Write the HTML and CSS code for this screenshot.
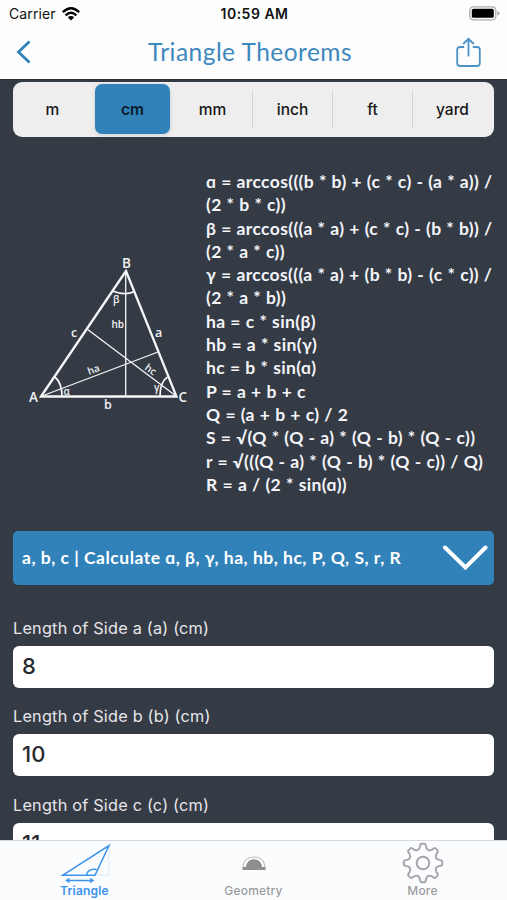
FILE: index.html
```html
<!DOCTYPE html>
<html lang="en">
<head>
<meta charset="utf-8">
<title>Triangle Theorems</title>
<link rel="stylesheet" href="styles.css">
</head>
<body>
<div class="app">
  <header class="top">
    <div class="status">
      <div class="carrier">Carrier
        <svg width="18" height="14" viewBox="0 0 18 14"><g fill="none" stroke="#000" stroke-width="2.3"><path d="M.8 5.2Q9-2.6 17.2 5.2"/><path d="M3.6 8.4Q9 3.2 14.4 8.4"/></g><path d="M5.8 10.2Q9 7.6 12.2 10.2L9 13.6z"/></svg>
      </div>
      <div class="clock">10:59 AM</div>
      <svg class="battery" width="31" height="15" viewBox="0 0 31 15"><rect x=".8" y=".8" width="26" height="13" rx="3.6" fill="#fff" stroke="#aaa" stroke-width="1.3"/><rect x="2.8" y="2.8" width="22" height="9" rx="1.6"/><path d="M28.4 5Q30.6 6 30.6 7.3T28.4 9.7z" fill="#aaa"/></svg>
    </div>
    <div class="nav">
      <svg width="16" height="24" viewBox="0 0 16 24"><path d="M13.5 1.5L2.5 12L13.5 22.5" fill="none" stroke="#3182b9" stroke-width="2.8"/></svg>
      <h1>Triangle Theorems</h1>
      <svg width="25" height="31" viewBox="0 0 25 31"><g fill="none" stroke="#4b93c6" stroke-width="1.8"><path d="M8.2 10H4Q1.2 10 1.2 12.8V26Q1.2 29 4 29H21Q23.8 29 23.8 26V12.8Q23.8 10 21 10H16.8"/><path d="M12.5 19.5V2M7.2 7L12.5 1.8L17.8 7"/></g></svg>
    </div>
  </header>
  <main>
    <div class="units">
      <div class="unit">m</div><div class="unit active">cm</div><div class="unit">mm</div><div class="unit line">inch</div><div class="unit line">ft</div><div class="unit line">yard</div>
    </div>
    <section class="theory">
      <svg class="figure" width="180" height="175" viewBox="20 245 180 175">
        <g fill="none" stroke="#f5f6f8">
          <path d="M41 396.5L126 271L176.5 396.5Z" stroke-width="2.3"/>
          <g stroke-width="1.3"><path d="M125.7 272V396M42 396L158 352M176 396L87 329"/></g>
          <g stroke-width="1.7"><path d="M112.5 291Q125 296 134.5 291.5M54.5 376.5Q62 383 62 396M167.5 377Q160 382 160 396"/></g>
        </g>
        <g class="vertex"><text x="122" y="267.5">B</text><text x="29" y="402">A</text><text x="178.5" y="402">C</text></g>
        <g class="side"><text x="71" y="337">c</text><text x="155" y="337">a</text><text x="104" y="409">b</text></g>
        <g class="inner"><text x="111.500" y="328">hb</text><text x="113" y="303">β</text><text x="63.500" y="395">α</text><text x="154" y="391">γ</text><text transform="translate(89 375) rotate(-20)">ha</text><text transform="translate(144 369) rotate(36)">hc</text></g>
      </svg>
      <div class="formulas">
        <div>ɑ = arccos(((b * b) + (c * c) - (a * a)) /</div>
        <div>(2 * b * c))</div>
        <div>β = arccos(((a * a) + (c * c) - (b * b)) /</div>
        <div>(2 * a * c))</div>
        <div>γ = arccos(((a * a) + (b * b) - (c * c)) /</div>
        <div>(2 * a * b))</div>
        <div>ha = c * sin(β)</div>
        <div>hb = a * sin(γ)</div>
        <div>hc = b * sin(ɑ)</div>
        <div>P = a + b + c</div>
        <div>Q = (a + b + c) / 2</div>
        <div>S = √(Q * (Q - a) * (Q - b) * (Q - c))</div>
        <div>r = √(((Q - a) * (Q - b) * (Q - c)) / Q)</div>
        <div>R = a / (2 * sin(ɑ))</div>
      </div>
    </section>
    <div class="select"><span>a, b, c | Calculate ɑ, β, γ, ha, hb, hc, P, Q, S, r, R</span>
      <svg width="46" height="28" viewBox="0 0 46 28"><path d="M3 3.5L23.5 23.5L43.5 3.5" fill="none" stroke="#fff" stroke-width="4" stroke-linecap="round"/></svg>
    </div>
    <form class="fields">
      <div class="label">Length of Side a (a) (cm)</div><div class="field">8</div>
      <div class="label">Length of Side b (b) (cm)</div><div class="field">10</div>
      <div class="label">Length of Side c (c) (cm)</div><div class="field">11</div>
    </form>
  </main>
  <nav class="tabs">
    <div class="tab on">
      <svg width="52" height="42" viewBox="59 842 52 42"><path d="M109 846V875H96" fill="none" stroke="#dcebfa" stroke-width="1"/><g fill="none" stroke="#3b93ee" stroke-width="1.5"><path d="M62.5 875.3L109 845.5L95 875.3ZM86.5 875Q88 868.5 96.5 869.5"/><path d="M67 880.5H92M69.5 878.5L66.5 880.5L69.5 882.5M90 878.5L93 880.5L90 882.5"/></g></svg>
      <span>Triangle</span>
    </div>
    <div class="tab">
      <svg width="52" height="42" viewBox="228 842 52 42"><path d="M243 867Q244 857 254 857Q264 857 265 867" fill="none" stroke="#b8b8bb" stroke-width="1.2"/><path d="M242.5 870V867H246Q247 859.3 254 859.3T262 867H265.5V870Z" fill="#8e8e91"/></svg>
      <span>Geometry</span>
    </div>
    <div class="tab">
      <svg width="52" height="42" viewBox="-26 -21 52 42"><defs><path id="tooth" d="M-3.3-15.3L-2.6-18.2Q-2.4-19.2-1.4-19.2H1.4Q2.4-19.2 2.6-18.2L3.3-15.3Q4.78-11.55 8.49-13.15"/></defs><g fill="none" stroke="#a3a4a7" stroke-width="1.9"><use href="#tooth"/><use href="#tooth" transform="rotate(45)"/><use href="#tooth" transform="rotate(90)"/><use href="#tooth" transform="rotate(135)"/><use href="#tooth" transform="rotate(180)"/><use href="#tooth" transform="rotate(225)"/><use href="#tooth" transform="rotate(270)"/><use href="#tooth" transform="rotate(315)"/><circle r="6.3"/></g></svg>
      <span>More</span>
    </div>
  </nav>
</div>
</body>
</html>
```
FILE: styles.css
```css
* { box-sizing: border-box; }
body { margin: 0; background: #353b45; font-family: Inter, sans-serif; }
svg { display: block; flex: none; }
.app { width: 507px; height: 900px; display: flex; flex-direction: column; overflow: hidden; }
.top { height: 79px; flex: none; background: #fdfdfd; }
.status { height: 27px; display: grid; grid-template-columns: 1fr auto 1fr; align-items: center; padding: 0 7px 0 9px; font-size: 14px; color: #111; }
.carrier { display: flex; align-items: center; gap: 6px; letter-spacing: .1px; }
.clock { font-weight: 600; font-size: 14px; letter-spacing: .5px; }
.battery { justify-self: end; }
.nav { height: 50px; display: grid; grid-template-columns: 35px 1fr 35px; align-items: center; padding: 0 16px; }
.nav svg:last-child { justify-self: end; margin-right: 10px; }
h1 { margin: -1px 7px 0 0; text-align: center; font: 400 24.5px Lato, sans-serif; letter-spacing: .45px; color: #3d88bd; }
main { flex: 1; min-height: 0; overflow: hidden; padding: 2px 13px 0; border-top: 1px solid #2a2c34; }
.units { height: 55px; display: grid; grid-template-columns: repeat(6, 1fr); background: #eee; border-radius: 9px; padding: 2px 1px 3px 0; }
.unit { display: flex; align-items: center; justify-content: center; font-size: 15.5px; font-weight: 500; color: #171717; position: relative; padding-right: 1px; }
.active { background: #3182b9; border-radius: 7px; margin: 0 3px 0 2px; padding-right: 0; font-weight: 600; color: #0b1b2b; box-shadow: 0 1px 4px #0002; }
.line::before { content: ""; position: absolute; left: -1px; top: 6px; bottom: 6px; width: 1px; background: #d3d3d5; }
.theory { display: flex; padding: 34px 0 0 7px; height: 394px; gap: 6px; }
.figure { margin-top: 74px; }
.figure text { fill: #f0f2f5; font-family: "Open Sans", sans-serif; font-weight: 600; }
.vertex { font-size: 13.5px; }
.side { font-size: 12.5px; }
.inner { font-size: 10px; }
.formulas { margin-top: -1px; font: 700 17.5px/23.3px Lato, sans-serif; color: #f3f5fa; white-space: nowrap; letter-spacing: .37px; word-spacing: .25px; }
.select { height: 54px; display: flex; align-items: center; justify-content: space-between; padding: 0 6px 0 9px; background: #3182b9; border-radius: 5px; color: #fff; font: 700 17.5px Lato, sans-serif; letter-spacing: .5px; white-space: nowrap; }
.select span { padding-bottom: 2px; }
.fields { padding-top: 31px; }
.label { height: 30px; line-height: 24px; font-size: 16.3px; color: #e5e6ea; letter-spacing: .2px; }
.field { height: 42px; margin-bottom: 16.3px; border-radius: 6px; background: #fff; color: #26282c; padding-left: 9px; line-height: 41px; font-size: 22px; font-weight: 500; }
.tabs { height: 60px; flex: none; display: grid; grid-template-columns: 1fr 1fr 1fr; background: #fbfcfe; border-top: 1px solid #d5d8df; color: #9b9ca0; }
.tab { display: flex; flex-direction: column; align-items: center; padding-top: 1px; font-size: 12px; line-height: 14px; font-weight: 500; letter-spacing: .2px; }
.on { color: #3b93ee; font-weight: 600; }
```
